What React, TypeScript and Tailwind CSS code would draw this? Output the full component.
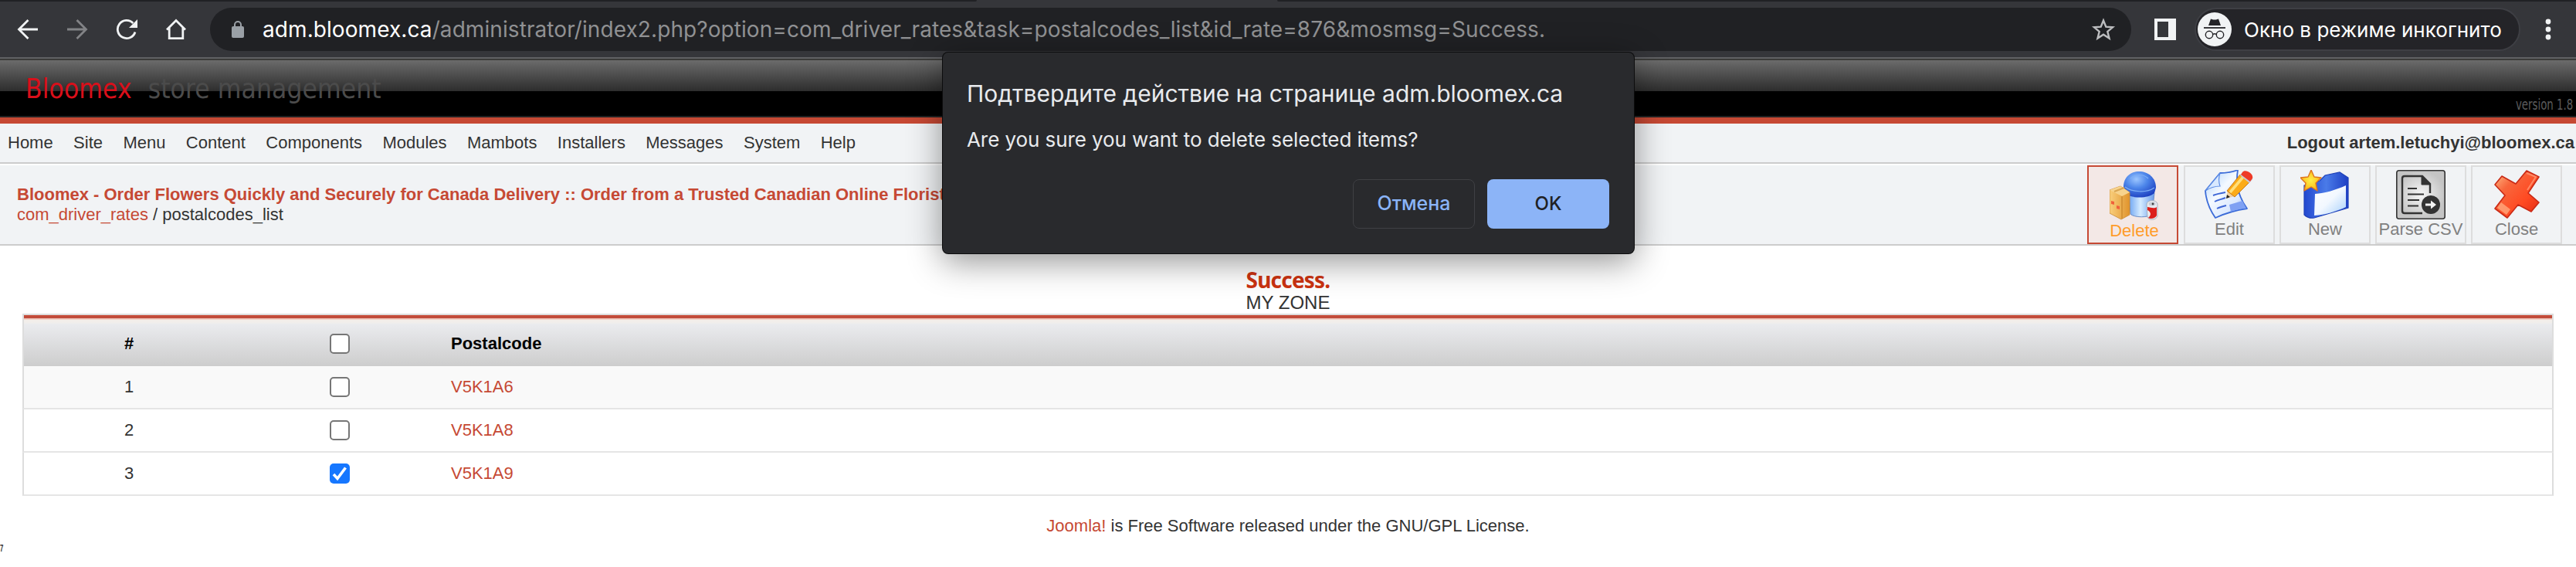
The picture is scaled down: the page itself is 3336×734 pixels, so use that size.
import { useState } from 'react';
import type { ReactNode } from 'react';

const menuItems = [
  'Home',
  'Site',
  'Menu',
  'Content',
  'Components',
  'Modules',
  'Mambots',
  'Installers',
  'Messages',
  'System',
  'Help',
];

const postalcodes = ['V5K1A6', 'V5K1A8', 'V5K1A9'];

function DeleteIcon() {
  return (
    <svg width="64" height="64" viewBox="0 0 64 64">
      <defs>
        <radialGradient id="dome" cx="0.4" cy="0.3" r="0.75">
          <stop offset="0" stopColor="#9cc6ff" />
          <stop offset="0.45" stopColor="#4d86ea" />
          <stop offset="1" stopColor="#1c3fc0" />
        </radialGradient>
        <linearGradient id="can" x1="0" x2="1">
          <stop offset="0" stopColor="#6ea5f2" />
          <stop offset="0.45" stopColor="#d4ebff" />
          <stop offset="1" stopColor="#6a9cec" />
        </linearGradient>
        <linearGradient id="box" x1="0" x2="1">
          <stop offset="0" stopColor="#f9cf7c" />
          <stop offset="1" stopColor="#e0932c" />
        </linearGradient>
      </defs>
      <path d="M25 28l2 27c4 5 25 5 28 0l3-27z" fill="url(#can)" stroke="#6d8fc8" />
      <path d="M18 22C17 8 27 0 38 0c12 0 22 8 22 21l-2 7c-8 7-27 7-36 2z" fill="url(#dome)" />
      <path d="M27 9c6-6 17-6 23 0M20 20c9 7 28 8 38 1" fill="none" stroke="#7fb0f6" strokeWidth="1.2" />
      <path d="M0 24l14-5 12 8v29l-11 6L0 54z" fill="url(#box)" stroke="#c98b3a" strokeWidth="0.8" />
      <path d="M0 24l14-5 12 8-10 5z" fill="#f7d38d" />
      <path d="M16 32v29" stroke="#c07c22" />
      <path d="M6 26l13-5" stroke="#d9a552" strokeWidth="2" />
      <path d="M2 38l4 1v4l-4-1zM9 44l4 1v4l-4-1z" fill="#f0603a" />
      <path d="M48 43c0-7 13-7 14-1v16c-2 5-11 6-13 1z" fill="#e7ebf0" stroke="#9aa3b0" strokeWidth="0.8" />
      <path d="M49 46c4 0 8 3 12 0v11c-2 4-8 5-11 3 5-4 3-8-1-10z" fill="#dc1f1c" />
      <ellipse cx="55" cy="42" rx="4.5" ry="2.4" fill="#c9ced6" />
      <circle cx="56" cy="42" r="1.4" fill="#444" />
    </svg>
  );
}

function EditIcon() {
  return (
    <svg width="64" height="64" viewBox="0 0 64 64">
      <defs>
        <linearGradient id="sheet" x1="0" y1="0" x2="1" y2="1">
          <stop offset="0" stopColor="#a9cffb" />
          <stop offset="0.4" stopColor="#f4f9ff" />
          <stop offset="0.7" stopColor="#dbe9fe" />
          <stop offset="1" stopColor="#6d95ef" />
        </linearGradient>
      </defs>
      <path
        d="M1 27L20 4C29 4 36 3 43 0c-3 18 1 35 12 50-15 2-28 6-41 12C7 52 2 40 1 27z"
        fill="url(#sheet)"
        stroke="#3b6bd8"
        strokeWidth="1.8"
        strokeLinejoin="round"
      />
      <path d="M1 27L20 4c-2 6-2 11 0 17-7 0-13 2-19 6z" fill="#d8e9ff" stroke="#5b8be4" strokeWidth="1.2" />
      <path d="M32 45l17-5 5 10c-7 0-13 2-20 4z" fill="#7fa1f3" />
      <path d="M11 33c5-2 10-3 16-4M13 41c4-2 9-3 14-5M16 50c4-2 8-3 12-4" fill="none" stroke="#3d66d6" strokeWidth="1.9" />
      <path d="M28 37l2-11 9 8z" fill="#f2d1a0" />
      <path d="M28 37l1-5 4 3z" fill="#222" />
      <path d="M29 27L46 6l12 10-19 19z" fill="#fbab18" stroke="#b96b12" strokeWidth="0.8" />
      <path d="M33 29L50 9" stroke="#ffdf7a" strokeWidth="3.5" />
      <path d="M46 7l4-5 12 10-4 5z" fill="#c5cad6" />
      <path d="M49 3c3-5 15 1 13 8l-3 4-12-9z" fill="#ee3a27" />
    </svg>
  );
}

function NewIcon() {
  return (
    <svg width="64" height="64" viewBox="0 0 64 64">
      <defs>
        <linearGradient id="panel" x1="0" y1="0" x2="1" y2="1">
          <stop offset="0" stopColor="#ffffff" />
          <stop offset="0.5" stopColor="#f2f8ff" />
          <stop offset="1" stopColor="#a6d0fb" />
        </linearGradient>
        <linearGradient id="cover" x1="0" x2="1">
          <stop offset="0" stopColor="#2348cf" />
          <stop offset="0.5" stopColor="#4a7be8" />
          <stop offset="1" stopColor="#1d3fc4" />
        </linearGradient>
        <radialGradient id="star">
          <stop offset="0" stopColor="#fff04a" />
          <stop offset="1" stopColor="#fbb916" />
        </radialGradient>
      </defs>
      <path d="M5 20l20-6 7-7 19-4 11 7v39L18 62c-6 1-10-1-13-4z" fill="url(#cover)" stroke="#1f41b8" strokeWidth="1.2" />
      <path d="M19 31c13-1 27-5 40-11v28c-13 6-27 10-41 11z" fill="url(#panel)" />
      <path d="M14 0l4 9 9 1-7 7 2 10-8-5-9 5 2-10-7-7 10-1z" fill="url(#star)" stroke="#dd7420" strokeWidth="1.4" strokeLinejoin="round" />
    </svg>
  );
}

function ParseIcon() {
  return (
    <svg width="64" height="64" viewBox="0 0 64 64" fill="none" stroke="#333">
      <defs>
        <radialGradient id="plate">
          <stop offset="0" stopColor="#f6f6f6" />
          <stop offset="1" stopColor="#c4c4c4" />
        </radialGradient>
      </defs>
      <rect x="0.8" y="0.8" width="62.4" height="62.4" rx="3" fill="url(#plate)" strokeWidth="1.6" />
      <path d="M34 56H11c-2 0-3-1-3-3V11c0-2 1-3 3-3h23l10 10v12" strokeWidth="2.4" />
      <path d="M33 8v11h11z" fill="#333" strokeWidth="1" />
      <path d="M15 24h12M15 31.500h21M15 39h15M15 46.500h14" strokeWidth="2.2" />
      <circle cx="45" cy="45" r="12" fill="#333" stroke="none" />
      <path d="M38 43.500h7V39.500l7 5.500-7 5.500v-4h-7z" fill="#f3f3f3" stroke="none" />
    </svg>
  );
}

function CloseIcon() {
  return (
    <svg width="64" height="64" viewBox="0 0 64 64">
      <defs>
        <linearGradient id="cross" x1="0" y1="0" x2="1" y2="1">
          <stop offset="0" stopColor="#ffc08a" />
          <stop offset="0.3" stopColor="#f8663c" />
          <stop offset="0.65" stopColor="#ff4a22" />
          <stop offset="1" stopColor="#e02612" />
        </linearGradient>
      </defs>
      <path
        d="M13 8L4 19l13 14L4 50l16 12 14-17 17 9 10-12-14-12L61 9 45 1 31 18z"
        fill="url(#cross)"
        stroke="#c92a16"
        strokeWidth="1.6"
        strokeLinejoin="round"
      />
      <path d="M7 49l12 9 5-7-12-9z" fill="#ffb489" opacity="0.7" />
      <path d="M45 4l12 5-11 17" fill="none" stroke="#ff8a66" strokeWidth="2" />
    </svg>
  );
}

const actions: { name: string; icon: ReactNode }[] = [
  { name: 'Edit', icon: <EditIcon /> },
  { name: 'New', icon: <NewIcon /> },
  { name: 'Parse CSV', icon: <ParseIcon /> },
  { name: 'Close', icon: <CloseIcon /> },
];

function BrowserBar() {
  return (
    <div className="h-[76px] bg-[#35363a] border-b-2 border-[#5f6063] font-[Inter,sans-serif]">
      <div className="flex justify-between h-[2px]">
        <div className="w-[1265px] bg-[#202124] rounded-br-sm" />
        <div className="w-[1682px] bg-[#202124] rounded-bl-sm" />
      </div>
      <div className="flex items-center h-[72px] pl-[22px]">
        <svg width="28" height="28" viewBox="0 0 28 28" fill="none" stroke="#f1f3f4" strokeWidth="2.8" className="shrink-0">
          <path d="M27 14H3M14.500 2L2.500 14l12 12" />
        </svg>
        <svg width="28" height="28" viewBox="0 0 28 28" fill="none" stroke="#828386" strokeWidth="2.8" className="shrink-0 ml-9">
          <path d="M1 14h24M13.500 2l12 12-12 12" />
        </svg>
        <svg width="28" height="28" viewBox="0 0 28 28" fill="none" stroke="#f1f3f4" strokeWidth="2.8" className="shrink-0 ml-9">
          <path d="M25 17.500A11.600 11.600 0 1 1 22.300 6" />
          <path d="M28 1v11H17z" fill="#f1f3f4" stroke="none" />
        </svg>
        <svg width="28" height="28" viewBox="0 0 28 28" fill="none" stroke="#f1f3f4" strokeWidth="2.8" className="shrink-0 ml-9">
          <path d="M2 14.500L14 2.500l12 12M5.200 12v13.600h17.600V12" />
        </svg>
        <div className="flex items-center w-[2488px] h-14 ml-[30px] pl-7 pr-[20px] rounded-full bg-[#202124] shrink-0">
          <svg width="16" height="22" viewBox="0 0 16 22" className="shrink-0">
            <rect y="7" width="16" height="15" rx="2" fill="#9aa0a6" />
            <path d="M4 8V5a4 4 0 0 1 8 0v3" fill="none" stroke="#9aa0a6" strokeWidth="2" />
          </svg>
          <div className="grow ml-[24px] text-[28px] tracking-[0.08px] text-[#909193] whitespace-nowrap">
            <span className="text-white">adm.bloomex.ca</span>
            /administrator/index2.php?option=com_driver_rates&amp;task=postalcodes_list&amp;id_rate=876&amp;mosmsg=Success.
          </div>
          <svg width="32" height="32" viewBox="0 0 32 32" fill="none" stroke="#bdbec0" strokeWidth="2.4" className="shrink-0">
            <path d="M16 4.500l3.300 8.200 8.700.6-6.700 5.600 2.200 8.600-7.500-4.800-7.500 4.800 2.200-8.600L4 13.300l8.700-.6z" />
          </svg>
        </div>
        <div className="w-7 h-7 ml-[30px] border-4 border-r-[10px] border-[#f1f3f4] shrink-0" />
        <div className="flex items-center w-[422px] h-14 ml-6 pl-[2px] rounded-full border-2 border-[#3e3f44] bg-[#242428] shrink-0">
          <svg width="44" height="44" viewBox="0 0 44 44" className="shrink-0">
            <circle cx="22" cy="22" r="22" fill="#f1f3f4" />
            <path d="M14 17l3-8.500 3.200.9h3.600l3.200-.9 3 8.500z" fill="#242428" />
            <path d="M8 20h28" stroke="#242428" strokeWidth="1.8" />
            <circle cx="15" cy="29" r="4.700" fill="none" stroke="#242428" strokeWidth="1.400" />
            <circle cx="29" cy="29" r="4.700" fill="none" stroke="#242428" strokeWidth="1.400" />
            <path d="M19.500 28.500q2.500-1.500 5 0" fill="none" stroke="#242428" strokeWidth="1.400" />
          </svg>
          <span className="ml-4 text-[26px] tracking-[0.02px] text-white whitespace-nowrap">Окно в режиме инкогнито</span>
        </div>
        <svg width="8" height="28" viewBox="0 0 8 28" fill="#f1f3f4" className="ml-8 shrink-0">
          <circle cx="4" cy="4" r="3.400" />
          <circle cx="4" cy="14" r="3.400" />
          <circle cx="4" cy="24" r="3.400" />
        </svg>
      </div>
    </div>
  );
}

function ConfirmDialog() {
  return (
    <div className="absolute left-[1220px] top-[67px] w-[897px] h-[262px] rounded-lg bg-[#292a2d] border border-black/70 pl-[31px] pr-[32px] pt-[33px] font-[Inter,sans-serif] text-[#e8eaed] shadow-[0_10px_44px_rgba(0,0,0,0.42)]">
      <div className="text-[30px] leading-10 whitespace-nowrap">Подтвердите действие на странице adm.bloomex.ca</div>
      <div className="mt-[22px] text-[26px] leading-9 tracking-[-0.08px]">Are you sure you want to delete selected items?</div>
      <div className="flex justify-end gap-4 mt-[33px] text-[25px] font-medium">
        <button className="w-[158px] h-16 rounded-lg border border-[#3f4044] text-[#8ab4f8]">Отмена</button>
        <button className="w-[158px] h-16 rounded-lg bg-[#8cb4f7] text-[#202124] text-[24px]">OK</button>
      </div>
    </div>
  );
}

function Checkbox({ checked, onChange }: { checked: boolean; onChange: () => void }) {
  return (
    <button
      role="checkbox"
      aria-checked={checked}
      onClick={onChange}
      className={`block mx-auto w-[26px] h-[26px] rounded-[5px] ${
        checked ? 'bg-[#1677ff]' : 'bg-white border-2 border-[#767676]'
      }`}
    >
      {checked && (
        <svg width="26" height="26" viewBox="0 0 26 26" fill="none" stroke="#fff" strokeWidth="3.6">
          <path d="M5 14l5 5.500L20.500 5.500" />
        </svg>
      )}
    </button>
  );
}

function App() {
  const [selected, setSelected] = useState<string[]>(['V5K1A9']);
  const toggle = (code: string) =>
    setSelected(
      selected.includes(code)
        ? selected.filter((item) => item !== code)
        : [...selected, code]
    );
  const allChecked = selected.length === postalcodes.length;

  return (
    <div className="relative w-[3336px] h-[734px] overflow-hidden bg-white font-['Liberation_Sans',Arial,sans-serif] text-[22px] text-[#333]">
      <BrowserBar />
      <div className="h-[76px] border-y-2 border-t-[#3b3b39] border-b-[#222] bg-[linear-gradient(#6b6b6b_0,#2d2d2d_40px,#000_40px)] flex justify-between font-['DejaVu_Sans_Condensed','DejaVu_Sans',sans-serif]">
        <div className="pl-[33px] pt-[15px] text-[35px] leading-[44px] whitespace-nowrap">
          <span className="text-[#d90f1a] tracking-[0.1px]">Bloomex</span>
          <span className="ml-[21px] text-[#4b4b4b] tracking-[0.1px]">store management</span>
        </div>
        <div className="pt-[45px] pr-[4px] text-[19px] leading-6 text-[#5c5c5c]">
          <span className="inline-block origin-right scale-x-[0.78]">version 1.8</span>
        </div>
      </div>
      <div className="h-2 bg-[#c64934]" />
      <div className="flex items-center justify-between h-[52px] pl-[10px] pr-[2px] bg-[#f1f3f5] border-b-2 border-[#ccc]">
        <div className="flex gap-[26.4px] pb-px">
          {menuItems.map((item) => (
            <span key={item}>{item}</span>
          ))}
        </div>
        <b className="pb-px">Logout artem.letuchyi@bloomex.ca</b>
      </div>
      <div className="flex items-center justify-between h-[104px] mt-[2px] pl-[22px] pr-[18px] bg-[#f1f3f5] border-b-2 border-[#ccc]">
        <div className="leading-[26px] whitespace-nowrap">
          <b className="text-[#c64934]">
            Bloomex - Order Flowers Quickly and Securely for Canada Delivery :: Order from a Trusted Canadian Online Florist
          </b>
          <div>
            <span className="text-[#c64934]">com_driver_rates</span> / postalcodes_list
          </div>
        </div>
        <div className="flex gap-[6px] text-center leading-[26px] text-[#808080]">
          <div className="w-[118px] h-[102px] mr-[1px] pt-[6px] pl-1 border-2 border-[#c64934] bg-[#f3e8e6] text-[#ff9c2a]">
            <div className="flex justify-center">
              <DeleteIcon />
            </div>
            Delete
          </div>
          {actions.map((action) => (
            <div key={action.name} className="w-[118px] h-[102px] pt-1 border-2 border-[#ddd] whitespace-nowrap">
              <div className="flex justify-center">{action.icon}</div>
              {action.name}
            </div>
          ))}
        </div>
      </div>
      <div className="pt-[28px] text-center">
        <div className="font-['Noto_Sans',sans-serif] font-bold text-[28px] leading-[32px] tracking-[-0.8px] text-[#cc3311]">Success.</div>
        <div className="text-[24px] leading-[27px] pb-px">MY ZONE</div>
      </div>
      <div className="mx-[29px] border-2 border-b-0 border-[#ddd]">
        <div className="grid grid-cols-[272px_274px_1fr] items-center h-[66px] pt-[7px] text-center font-bold text-black bg-[linear-gradient(#c64934_0,#bf4d40_4px,#e9b9ad_4px,#f3d9d0_6px,#f4eee9_6px,#f0eeec_10px,#eaebee_12px,#cdcdcd_100%)]">
          <span>#</span>
          <Checkbox
            checked={allChecked}
            onChange={() => setSelected(allChecked ? [] : postalcodes)}
          />
          <span className="text-left pl-[7px]">Postalcode</span>
        </div>
      </div>
      {postalcodes.map((code, i) => (
        <div
          key={code}
          className={`grid grid-cols-[272px_274px_1fr] items-center mx-[29px] h-14 text-center border-2 border-t-0 border-x-[#ddd] border-b-[#e5e5e5] ${
            i === 0 ? 'bg-[#f9f9f9]' : 'bg-white'
          }`}
        >
          <span className="pb-[2px]">{i + 1}</span>
          <Checkbox checked={selected.includes(code)} onChange={() => toggle(code)} />
          <a className="text-left pl-[7px] pb-[2px] text-[#c64934]">{code}</a>
        </div>
      ))}
      <div className="pt-[26px] text-center leading-[26px]">
        <span className="text-[#c64934]">Joomla!</span> is Free Software released under the GNU/GPL License.
      </div>
      <div className="mt-[8px] text-[13px] leading-4 font-bold">
        <span className="inline-block origin-left scale-x-[0.6]">7</span>
      </div>
      <ConfirmDialog />
    </div>
  );
}

export default App;
